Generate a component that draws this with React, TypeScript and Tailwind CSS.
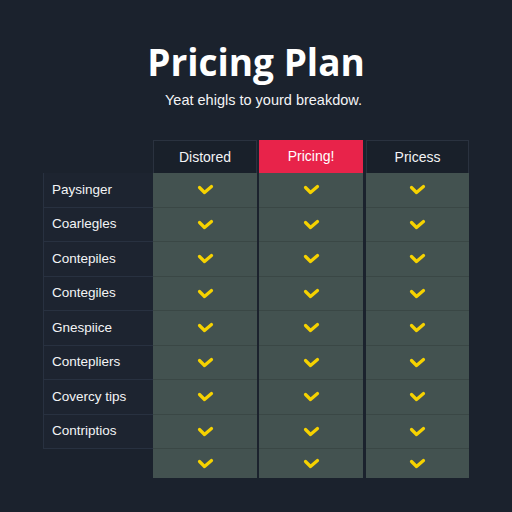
import { JSX } from "react";

/* ================= DATA ================= */

const plans = ["Distored", "Pricing!", "Pricess"];

const features = [
  "Paysinger",
  "Coarlegles",
  "Contepiles",
  "Contegiles",
  "Gnespiice",
  "Contepliers",
  "Covercy tips",
  "Contriptios",
];

/* ================= COMPONENT ================= */

export default function App() {
  return (
    <div
      className="w-[512px] h-[512px] bg-[#1b222d] text-white overflow-hidden"
      style={{ fontFamily: "'Liberation Sans', Arial, sans-serif" }}
    >
      {/* ================= HEADER ================= */}
      <div className="pt-[38px] text-center">
        <h1
          className="text-[37px] leading-[48px] font-bold"
          style={{ fontFamily: "'Open Sans', sans-serif" }}
        >
          Pricing Plan
        </h1>
        <p className="mt-[5px] pl-[15px] text-[14.5px] leading-[18px] text-gray-100">
          Yeat ehigls to yourd breakdow.
        </p>
      </div>

      {/* ================= TABLE ================= */}
      <div className="mt-[31px] ml-[43px] flex">
        {/* labels */}
        <div className="w-[110px] flex flex-col">
          <div className="h-[33px]" />
          {features.map((f) => (
            <div
              key={f}
              className="h-[34.5px] flex items-center pl-[8px] text-[13.5px] text-gray-100 bg-[#1d2430] border-l border-b border-[#283140] first:border-t"
            >
              {f}
            </div>
          ))}
        </div>

        <PlanColumn title={plans[0]} />
        <div className="w-[2px]" />
        <PlanColumn title={plans[1]} highlight />
        <div className="w-[3px]" />
        <PlanColumn title={plans[2]} narrow />
      </div>
    </div>
  );
}

/* ================= SMALL COMPONENTS ================= */

function PlanColumn({
  title,
  highlight,
  narrow,
}: {
  title: string;
  highlight?: boolean;
  narrow?: boolean;
}) {
  return (
    <div className={`${narrow ? "w-[103px]" : "w-[104px]"} flex flex-col`}>
      <div
        className={`h-[33px] flex items-center justify-center text-[14px] ${
          highlight
            ? "bg-[#e8234a] text-white"
            : "bg-[#19202a] border-t border-x border-[#2a323f] text-gray-100"
        }`}
      >
        {title}
      </div>
      {features.map((f) => (
        <div
          key={f}
          className="h-[34.5px] flex items-center justify-center bg-[#435250] border-b border-[#3a4745]"
        >
          <Check />
        </div>
      ))}
      <div className="h-[29px] flex items-center justify-center bg-[#435250]">
        <Check />
      </div>
    </div>
  );
}

function Check(): JSX.Element {
  return (
    <svg width="17" height="12" viewBox="0 0 17 12" className="mt-[1px]">
      <path
        d="M2.5 3.5 L7.5 8.5 L14.5 2.5"
        fill="none"
        stroke="#f6d200"
        strokeWidth="3.2"
        strokeLinecap="round"
        strokeLinejoin="round"
      />
    </svg>
  );
}
